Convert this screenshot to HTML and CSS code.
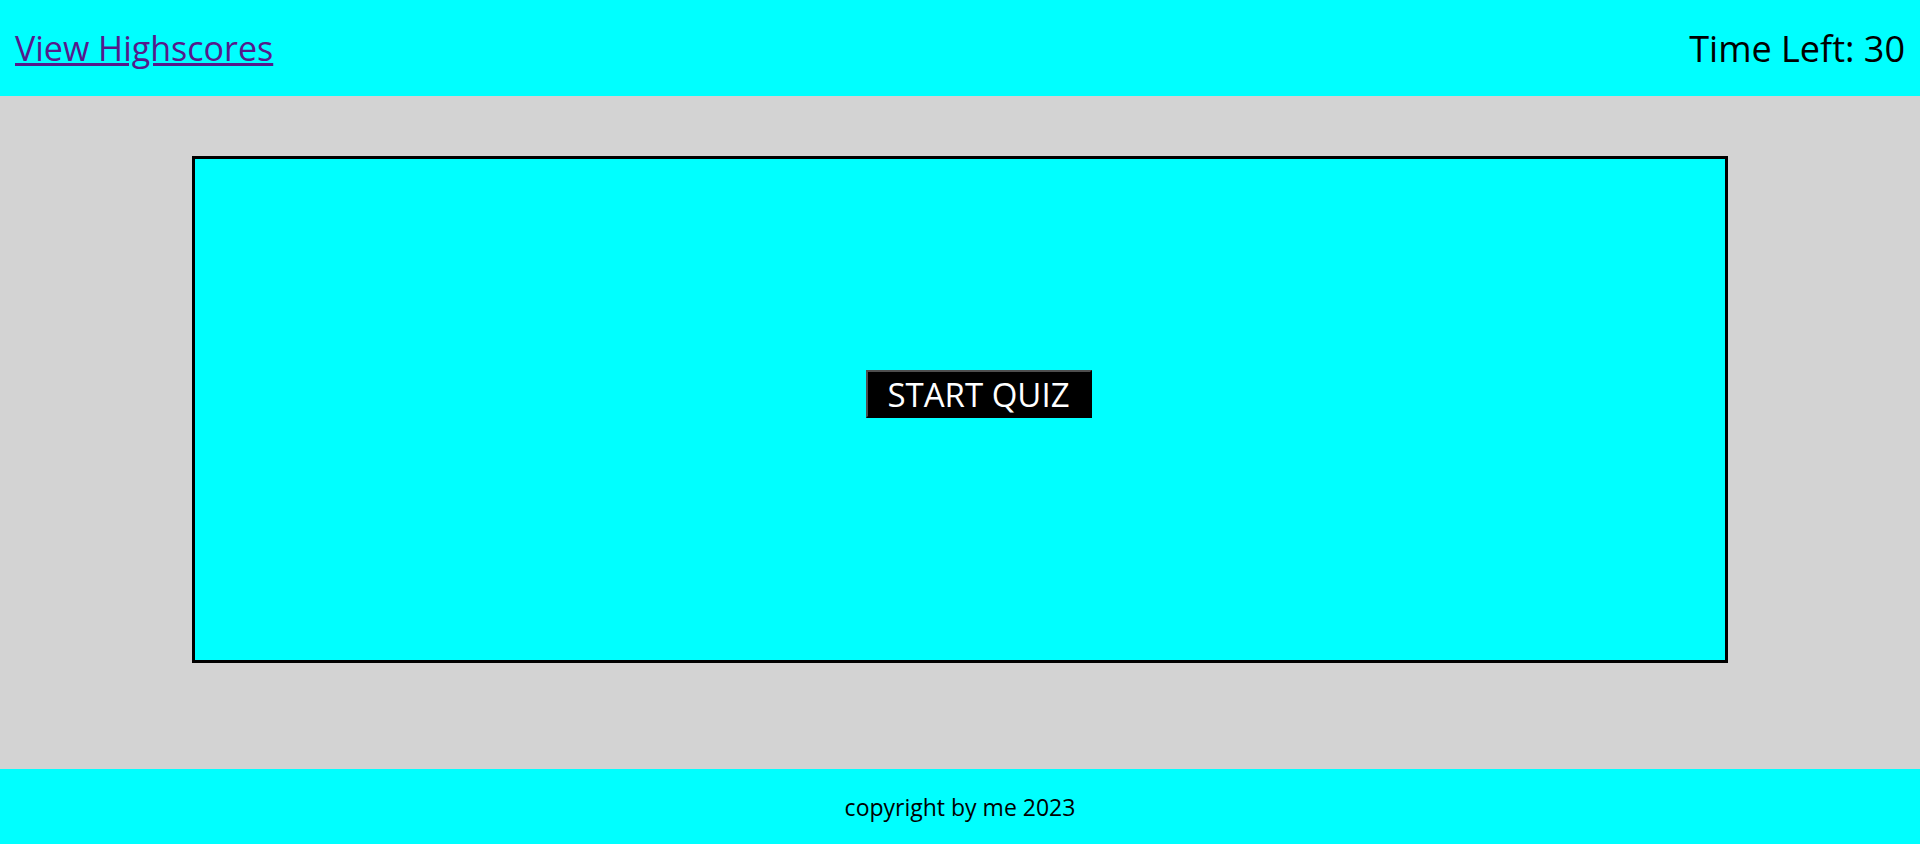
FILE: index.html
```html
<!DOCTYPE html>
<html lang="en">
<head>
<meta charset="utf-8">
<title>Quiz</title>
<link rel="stylesheet" href="styles.css">
</head>
<body>
<header class="topbar">
  <a class="scores-link" href="#">View Highscores</a>
  <div class="timer">Time Left: 30</div>
</header>
<main class="main">
  <section class="quiz-box">
    <button class="start-btn">START QUIZ</button>
  </section>
</main>
<footer class="footer">copyright by me 2023</footer>
</body>
</html>
```
FILE: styles.css
```css
html, body {
  margin: 0;
  padding: 0;
  height: 100%;
}
body {
  display: flex;
  flex-direction: column;
  font-family: "Open Sans", "DejaVu Sans", sans-serif;
  background: #d3d3d3;
}
.topbar {
  height: 96px;
  background: #00ffff;
  display: flex;
  align-items: center;
  justify-content: space-between;
  padding: 0 15px 0 15px;
  box-sizing: border-box;
  font-size: 34px;
}
.scores-link {
  color: #551a8b;
}
.timer {
  color: #000;
  font-size: 36px;
}
.main {
  flex: 1;
  padding-top: 60px;
  box-sizing: border-box;
}
.quiz-box {
  width: 80%;
  height: 507px;
  margin: 0 auto;
  border: 3px solid #000;
  background: #00ffff;
  display: flex;
  justify-content: center;
  align-items: flex-start;
  padding-top: 211px;
  box-sizing: border-box;
}
.start-btn {
  margin-left: 37px;
  width: 226px;
  height: 48px;
  background: #000;
  color: #fff;
  font-family: inherit;
  font-size: 33px;
  line-height: 1;
  border: 2px solid #000;
  border-top-color: #4e4e4e;
  border-left-color: #4e4e4e;
  padding: 0;
  cursor: pointer;
}
.footer {
  height: 75px;
  background: #00ffff;
  display: flex;
  align-items: center;
  justify-content: center;
  font-size: 23px;
  color: #000;
}
```
